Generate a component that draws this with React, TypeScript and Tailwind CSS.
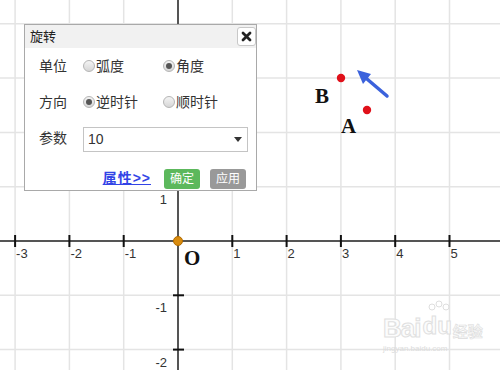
import React from "react";

const OX = 178;
const OY = 241;
const STEP = 54.3;

const Radio = ({ checked, label }: { checked?: boolean; label: string }) => (
  <div className="flex items-center">
    <span className="w-[12px] h-[12px] rounded-full border border-[#b5b5b5] bg-gradient-to-b from-[#f4f4f4] to-[#d6d6d6] flex items-center justify-center">
      {checked && <span className="w-[6px] h-[6px] rounded-full bg-[#555]" />}
    </span>
    <span className="ml-[1px]">{label}</span>
  </div>
);

const Graph = () => {
  const xs = [-3, -2, -1, 0, 1, 2, 3, 4, 5, 6];
  const ys = [-3, -2, -1, 0, 1, 2, 3, 4];
  return (
    <svg width="500" height="370" className="absolute left-0 top-0">
      {xs.map((k) => (
        <line key={"gx" + k} x1={OX + k * STEP} y1={0} x2={OX + k * STEP} y2={370} stroke="#e4e4e4" strokeWidth="1.5" />
      ))}
      {ys.map((k) => (
        <line key={"gy" + k} x1={0} y1={OY - k * STEP} x2={500} y2={OY - k * STEP} stroke="#e4e4e4" strokeWidth="1.5" />
      ))}
      <line x1={0} y1={OY} x2={500} y2={OY} stroke="#555" strokeWidth="2" />
      <line x1={OX} y1={0} x2={OX} y2={370} stroke="#555" strokeWidth="2" />
      {[-3, -2, -1, 1, 2, 3, 4, 5].map((k) => (
        <g key={"tx" + k}>
          <line x1={OX + k * STEP} y1={OY - 6} x2={OX + k * STEP} y2={OY + 6} stroke="#111" strokeWidth="2" />
          <text x={OX + k * STEP + 1} y={OY + 17} fontSize="13" fill="#333" fontFamily="'Liberation Sans', Arial, sans-serif">
            {k}
          </text>
        </g>
      ))}
      {[-2, -1, 1, 3].map((k) => (
        <g key={"ty" + k}>
          <line x1={OX - 5} y1={OY - k * STEP} x2={OX + 6} y2={OY - k * STEP} stroke="#111" strokeWidth="2" />
          <text x={OX - 11} y={OY - k * STEP + 17} fontSize="13" fill="#333" textAnchor="end" fontFamily="'Liberation Sans', Arial, sans-serif">
            {k === 3 ? "" : k}
          </text>
        </g>
      ))}
      <circle cx={OX} cy={OY} r="4.5" fill="#d98c0f" stroke="#b06a00" strokeWidth="1" />
      <text x={184} y={265} fontSize="21" fontWeight="bold" fill="#111" fontFamily="'Liberation Serif', 'Times New Roman', serif">
        O
      </text>
      <circle cx={341} cy={78} r="4.2" fill="#e0101a" />
      <circle cx={367} cy={110} r="4.2" fill="#e0101a" />
      <text x={315} y={103} fontSize="21" fontWeight="bold" fill="#111" fontFamily="'Liberation Serif', 'Times New Roman', serif">
        B
      </text>
      <text x={341} y={133} fontSize="21" fontWeight="bold" fill="#111" fontFamily="'Liberation Serif', 'Times New Roman', serif">
        A
      </text>
      <polygon points="357,70 363,84 371,74" fill="#3b62dc" />
      <line x1={367} y1={79} x2={387} y2={96} stroke="#3b62dc" strokeWidth="3.5" strokeLinecap="round" />
    </svg>
  );
};

const Watermark = () => (
  <div className="absolute left-[383px] top-[314px] flex flex-col items-start select-none">
    <div className="flex items-end">
      <span className="text-[26px] leading-[26px] font-bold tracking-[-1px]" style={{ WebkitTextStroke: "1px #e0e0e0", color: "#fcfcfc" }}>
        Bai
      </span>
      <div className="relative ml-[2px]">
        <svg width="30" height="30" viewBox="0 0 30 30" className="absolute -top-[16px] left-[2px]">
          <circle cx="8" cy="9" r="3" fill="none" stroke="#dedede" />
          <circle cx="15" cy="6" r="3" fill="none" stroke="#dedede" />
          <circle cx="22" cy="9" r="3" fill="none" stroke="#dedede" />
        </svg>
        <span className="text-[24px] leading-[24px] font-bold" style={{ WebkitTextStroke: "1px #e0e0e0", color: "#fcfcfc" }}>
          du
        </span>
      </div>
      <span className="text-[15px] leading-[18px] font-bold ml-[1px]" style={{ WebkitTextStroke: "0.6px #dcdcdc", color: "#f8f8f8" }}>
        经验
      </span>
    </div>
    <span className="text-[8px] leading-[10px] mt-[3px] text-[#dcdcdc]">jingyan.baidu.com</span>
  </div>
);

export default function App() {
  return (
    <div
      className="relative w-[500px] h-[370px] bg-white overflow-hidden text-[#333]"
      style={{ fontFamily: "'Liberation Sans', 'Noto Sans CJK SC', sans-serif" }}
    >
      <Graph />
      <Watermark />

      {/* rotate dialog */}
      <div className="absolute left-[24px] top-[24px] w-[233px] h-[167px] bg-white border border-[#a9a9a9] text-[14px]">
        <div className="relative h-[23px] bg-[#f1f1f1] flex items-center pl-[5px] text-[13px] text-[#222]">
          旋转
          <button className="absolute left-[212px] top-[2px] w-[19px] h-[19px] bg-white border border-[#c8c8c8] rounded-[3px] flex items-center justify-center">
            <svg width="11" height="11" viewBox="0 0 11 11">
              <path d="M2 2 L9 9 M9 2 L2 9" stroke="#222" strokeWidth="2.8" strokeLinecap="round" />
            </svg>
          </button>
        </div>
        <div className="pl-[14px]">
          <div className="h-[36px] flex items-center">
            <span className="w-[44px]">单位</span>
            <div className="w-[80px]">
              <Radio label="弧度" />
            </div>
            <Radio checked label="角度" />
          </div>
          <div className="h-[36px] flex items-center">
            <span className="w-[44px]">方向</span>
            <div className="w-[80px]">
              <Radio checked label="逆时针" />
            </div>
            <Radio label="顺时针" />
          </div>
          <div className="h-[36px] flex items-center">
            <span className="w-[44px]">参数</span>
            <div className="w-[165px] h-[25px] border border-[#c4c4c4] flex items-center justify-between pl-[4px] pr-[5px] mt-[3px]">
              <span className="text-[14px]">10</span>
              <svg width="8" height="5" viewBox="0 0 8 5">
                <path d="M0 0 L8 0 L4 5 Z" fill="#333" />
              </svg>
            </div>
          </div>
        </div>
        <div className="flex items-center justify-end pr-[10px] pt-[12px]">
          <a className="text-[#3344e6] underline text-[14px] font-semibold tracking-[1px] mr-[13px]">属性&gt;&gt;</a>
          <button className="w-[36px] h-[20px] rounded-[3px] bg-[#5cb85c] text-white text-[12px] flex items-center justify-center mr-[10px]">
            确定
          </button>
          <button className="w-[36px] h-[20px] rounded-[3px] bg-[#999] text-white text-[12px] flex items-center justify-center">
            应用
          </button>
        </div>
      </div>
    </div>
  );
}
